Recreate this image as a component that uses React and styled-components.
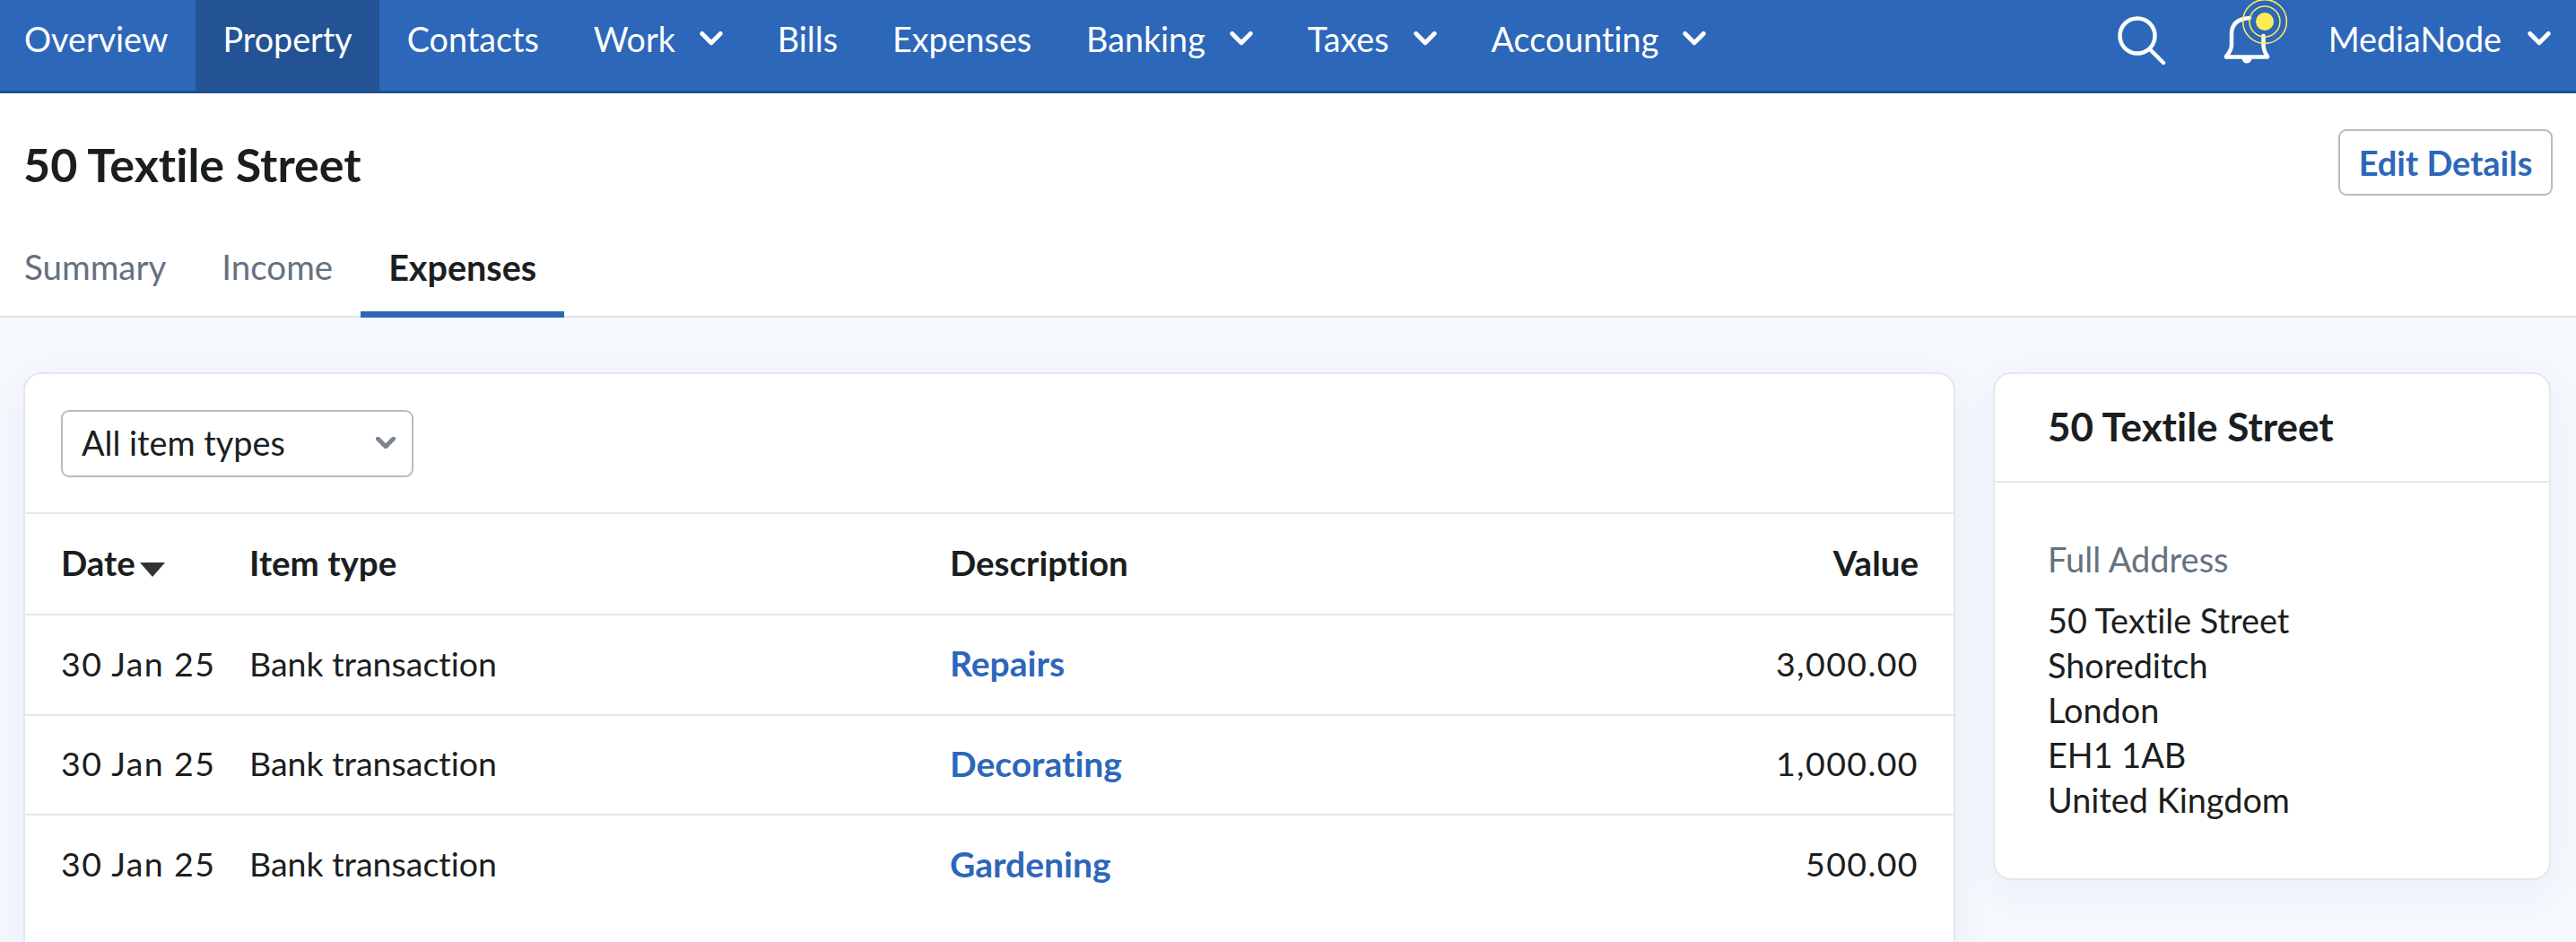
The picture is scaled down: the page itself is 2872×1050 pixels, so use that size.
import React from "react";
import styled, { createGlobalStyle } from "styled-components";

const Global = createGlobalStyle`
  html, body { margin: 0; padding: 0; background: #f5f8fd; }
  * { box-sizing: border-box; }
  body {
    font-family: "Lato", "Liberation Sans", sans-serif;
    color: #1b1e21;
    font-variant-ligatures: none;
  }
`;

const Page = styled.div`
  width: 2872px;
  height: 1050px;
  overflow: hidden;
  background: #f5f8fd;
`;

const NavBar = styled.nav`
  height: 104px;
  display: flex;
  background: #2d67b9;
  border-bottom: 3px solid #1f5091;
  padding-right: 28px;
`;

const NavItem = styled.a`
  display: flex;
  align-items: center;
  gap: 27px;
  height: 101px;
  padding: 0 30.5px 15px ${(p) => (p.$first ? "27px" : "30.5px")};
  font-size: 37.7px;
  color: #fff;
  white-space: nowrap;
  background: ${(p) => (p.$active ? "#235394" : "transparent")};
`;

const NavRight = styled.div`
  margin-left: auto;
  display: flex;
  align-items: flex-start;
`;

const IconSlot = styled.div`
  display: flex;
  height: 101px;
  margin-right: ${(p) => p.$mr}px;
`;

const UserMenu = styled.a`
  display: flex;
  align-items: center;
  gap: 29px;
  height: 101px;
  padding-bottom: 15px;
  font-size: 37.7px;
  color: #fff;
`;

const PageHead = styled.header`
  background: #fff;
  height: 250px;
  border-bottom: 2px solid #e1e4ea;
  padding: 0 26px;
`;

const TitleRow = styled.div`
  display: flex;
  justify-content: space-between;
  align-items: flex-start;
  height: 155px;
  padding-top: 40px;
`;

const Title = styled.h1`
  margin: 9px 0 0;
  font-size: 52px;
  line-height: 60px;
  font-weight: 700;
`;

const EditButton = styled.button`
  width: 239px;
  height: 74px;
  background: #fff;
  border: 2px solid #b5bcc3;
  border-radius: 9px;
  color: #2d67b9;
  font: 700 38px "Lato", "Liberation Sans", sans-serif;
  font-variant-ligatures: none;
  padding: 0;
`;

const Tabs = styled.div`
  display: flex;
  height: 95px;
`;

const Tab = styled.a`
  display: flex;
  align-items: center;
  height: 95px;
  padding: 0 31px 12px;
  margin-left: ${(p) => (p.$first ? "-30px" : "0")};
  font-size: ${(p) => (p.$active ? "39.5px" : "38.5px")};
  font-weight: ${(p) => (p.$active ? 700 : 400)};
  color: ${(p) => (p.$active ? "#1b1e21" : "#65717f")};
  border-bottom: 7px solid ${(p) => (p.$active ? "#2d67b9" : "transparent")};
`;

const Main = styled.main`
  display: grid;
  grid-template-columns: 2154px 622px;
  column-gap: 42px;
  align-items: start;
  padding: 61px 28px 0 26px;
`;

const Card = styled.section`
  background: #fff;
  border: 2px solid #e4e7ec;
  border-radius: 20px;
  box-shadow: 0 12px 40px rgba(60, 90, 150, 0.06);
`;

const FilterBar = styled.div`
  height: 156px;
  padding: 40px 0 0 40px;
  border-bottom: 2px solid #e4e7ec;
`;

const SelectBox = styled.div`
  width: 393px;
  height: 75px;
  display: flex;
  align-items: center;
  justify-content: space-between;
  padding: 0 18px 2px 21px;
  border: 2px solid #b5bcc3;
  border-radius: 9px;
  font-size: 37.8px;
`;

const Table = styled.table`
  width: 100%;
  border-collapse: collapse;
  table-layout: fixed;
  margin-bottom: 80px;
`;

const Th = styled.th`
  height: 112px;
  padding: 0 ${(p) => (p.$right ? "39px" : "0")} 3px ${(p) => (p.$first ? "40px" : "0")};
  width: ${(p) => p.$w || "auto"};
  text-align: ${(p) => (p.$right ? "right" : "left")};
  font-size: 38.5px;
  font-weight: 700;
  border-bottom: 2px solid #e4e7ec;
`;

const Td = styled.td`
  height: 111.5px;
  padding: 0 ${(p) => (p.$right ? "39px" : "0")} 3px ${(p) => (p.$first ? "40px" : "0")};
  text-align: ${(p) => (p.$right ? "right" : "left")};
  font-size: 37.5px;
  letter-spacing: ${(p) => (p.$num ? "1.4px" : "0")};
  border-bottom: ${(p) => (p.$last ? "none" : "2px solid #e4e7ec")};
`;

const RowLink = styled.a`
  color: #2d67b9;
  font-size: 39px;
  font-weight: 700;
`;

const SortArrow = styled.span`
  display: inline-block;
  width: 0;
  height: 0;
  margin-left: 5px;
  vertical-align: -1px;
  border-left: 14px solid transparent;
  border-right: 14px solid transparent;
  border-top: 16px solid #333;
`;

const SideHead = styled.div`
  height: 121px;
  padding: 0 0 3px 59px;
  display: flex;
  align-items: center;
  border-bottom: 2px solid #e4e7ec;
  font-size: 44px;
  font-weight: 700;
`;

const SideBody = styled.div`
  padding: 60px 0 62px 59px;
`;

const FieldLabel = styled.div`
  font-size: 38px;
  line-height: 50px;
  color: #65717f;
  margin-bottom: 19px;
`;

const AddressLine = styled.div`
  font-size: 37.8px;
  line-height: 50px;
`;

const Chevron = ({ size = 26, color = "#fff", sw = 5 }) => (
  <svg width={size} height={size * 0.6} viewBox="0 0 26 16" fill="none">
    <path d="M2.5 2.5 13 13 23.5 2.5" stroke={color} strokeWidth={sw} strokeLinecap="round" strokeLinejoin="round" />
  </svg>
);

const SearchIcon = () => (
  <svg width="54" height="101" viewBox="0 0 54 101" fill="none">
    <circle cx="22" cy="40" r="19.5" stroke="#fff" strokeWidth="4.5" />
    <path d="M36 55 51 70" stroke="#fff" strokeWidth="4.5" strokeLinecap="round" />
  </svg>
);

const BellIcon = () => (
  <svg width="76" height="101" viewBox="0 0 76 101" fill="none">
    <path d="M6 63.5H52" stroke="#fff" strokeWidth="4.5" strokeLinecap="round" />
    <path d="M6 63C9 59.5 12 56 12 50V38C12 28 18 21 32 20" stroke="#fff" strokeWidth="4.5" strokeLinecap="round" />
    <path d="M47.5 40V50C47.5 56 50 60 52 63" stroke="#fff" strokeWidth="4.5" strokeLinecap="round" />
    <path d="M23.5 65H34.5A5.5 5.5 0 0 1 23.5 65Z" fill="#fff" />
    <circle cx="49" cy="24" r="10" fill="#fdec5a" />
    <circle cx="49" cy="24" r="17" stroke="#fdec5a" strokeWidth="1.6" />
    <circle cx="49" cy="24" r="24.4" stroke="#fdec5a" strokeWidth="1.6" />
  </svg>
);

const navItems = [
  { label: "Overview", first: true },
  { label: "Property", active: true },
  { label: "Contacts" },
  { label: "Work", menu: true },
  { label: "Bills" },
  { label: "Expenses" },
  { label: "Banking", menu: true },
  { label: "Taxes", menu: true },
  { label: "Accounting", menu: true },
];

const rows = [
  { date: "30 Jan 25", type: "Bank transaction", desc: "Repairs", value: "3,000.00" },
  { date: "30 Jan 25", type: "Bank transaction", desc: "Decorating", value: "1,000.00" },
  { date: "30 Jan 25", type: "Bank transaction", desc: "Gardening", value: "500.00" },
];

const address = ["50 Textile Street", "Shoreditch", "London", "EH1 1AB", "United Kingdom"];

export default function App() {
  return (
    <Page>
      <Global />
      <NavBar>
        {navItems.map((n) => (
          <NavItem key={n.label} $first={n.first} $active={n.active}>
            {n.label}
            {n.menu && <Chevron />}
          </NavItem>
        ))}
        <NavRight>
          <IconSlot $mr={61}><SearchIcon /></IconSlot>
          <IconSlot $mr={44}><BellIcon /></IconSlot>
          <UserMenu>MediaNode<Chevron /></UserMenu>
        </NavRight>
      </NavBar>
      <PageHead>
        <TitleRow>
          <Title>50 Textile Street</Title>
          <EditButton>Edit Details</EditButton>
        </TitleRow>
        <Tabs>
          <Tab $first>Summary</Tab>
          <Tab>Income</Tab>
          <Tab $active>Expenses</Tab>
        </Tabs>
      </PageHead>
      <Main>
        <Card>
          <FilterBar>
            <SelectBox>
              All item types
              <Chevron size={22} color="#7a8791" sw={6} />
            </SelectBox>
          </FilterBar>
          <Table>
            <thead>
              <tr>
                <Th $first $w="250px">Date<SortArrow /></Th>
                <Th $w="781px">Item type</Th>
                <Th>Description</Th>
                <Th $right>Value</Th>
              </tr>
            </thead>
            <tbody>
              {rows.map((r, i) => (
                <tr key={r.desc}>
                  <Td $first $num $last={i === rows.length - 1}>{r.date}</Td>
                  <Td $last={i === rows.length - 1}>{r.type}</Td>
                  <Td $last={i === rows.length - 1}><RowLink>{r.desc}</RowLink></Td>
                  <Td $right $num $last={i === rows.length - 1}>{r.value}</Td>
                </tr>
              ))}
            </tbody>
          </Table>
        </Card>
        <Card>
          <SideHead>50 Textile Street</SideHead>
          <SideBody>
            <FieldLabel>Full Address</FieldLabel>
            {address.map((l) => <AddressLine key={l}>{l}</AddressLine>)}
          </SideBody>
        </Card>
      </Main>
    </Page>
  );
}
